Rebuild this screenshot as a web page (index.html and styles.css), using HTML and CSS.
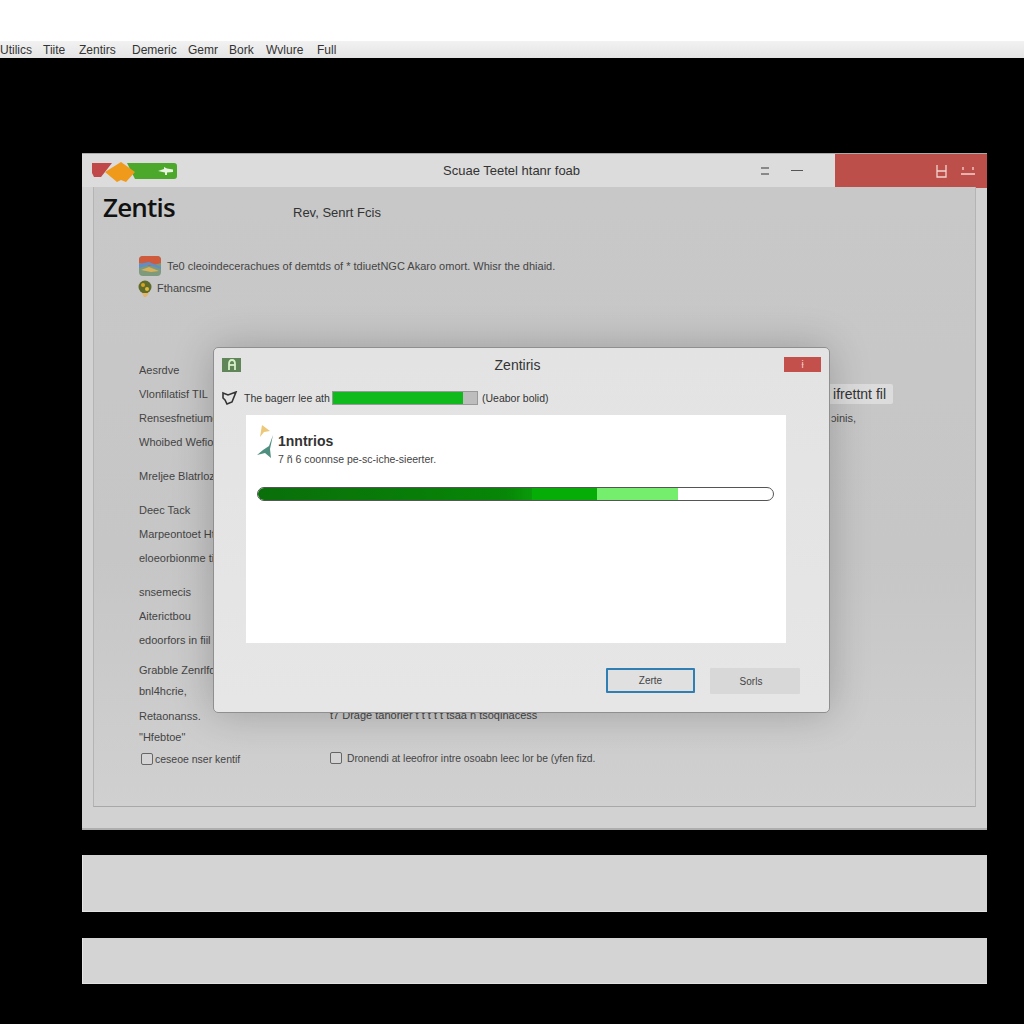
FILE: index.html
```html
<!DOCTYPE html>
<html lang="en">
<head>
    <meta charset="UTF-8">
    <meta name="viewport" content="width=device-width, initial-scale=1.0">
    <title>Zentris</title>
    <link rel="stylesheet" href="styles.css">
</head>
<body>
    <div class="top-strip"></div>
    <nav class="menubar">
        <span class="m1">Utilics</span>
        <span class="m2">Tiite</span>
        <span class="m3">Zentirs</span>
        <span class="m4">Demeric</span>
        <span class="m5">Gemr</span>
        <span class="m6">Bork</span>
        <span class="m7">Wvlure</span>
        <span>Full</span>
    </nav>

    <main class="desktop">
        <section class="window">
            <header class="titlebar">
                <svg class="logo" width="85" height="21" viewBox="0 0 85 21">
                    <path d="M0 1H20L9 15H2L0 11Z" fill="#c04848"/>
                    <path d="M35 1H82Q85 1 85 4V14Q85 17 82 17H43Z" fill="#4ba82a"/>
                    <path d="M29 0L43 10L34 20L29 18L25 20L13 10Z" fill="#f09a1c"/>
                    <path d="M66 9L72 7V5L75 6.500L81 7.500V10L75 10.500V13H73V10.500Z" fill="#e8f4df"/>
                </svg>
                <div class="win-title">Scuae Teetel htanr foab</div>
                <div class="win-controls">
                    <span class="ctl-lines"></span>
                    <span class="ctl-min"></span>
                </div>
                <div class="win-close">
                    <svg width="11" height="13" viewBox="0 0 11 13" fill="none" stroke="#f3d4cf" stroke-width="1.300">
                        <path d="M1 0V12H10V0M1 6H10"/>
                    </svg>
                    <svg width="14" height="9" viewBox="0 0 14 9" fill="none" stroke="#f3d4cf" stroke-width="1.300">
                        <path d="M2 0V3M12 0V3M0 7H14"/>
                    </svg>
                </div>
            </header>

            <div class="panel">
                <div class="panel-head">
                    <h1>Zentis</h1>
                    <span class="subhead">Rev, Senrt Fcis</span>
                </div>

                <div class="intro">
                    <div class="intro-line">
                        <svg width="22" height="20" viewBox="0 0 22 20">
                            <rect width="22" height="20" rx="4" fill="#7d9a7d"/>
                            <path d="M0 4Q0 0 4 0H18Q22 0 22 4V7L11 10L0 7Z" fill="#cf5a3c"/>
                            <path d="M0 8L10 6L22 11V13L10 9L0 12Z" fill="#5f8fc8"/>
                            <path d="M2 14L10 11L20 15L12 16Z" fill="#d8b25a"/>
                        </svg>
                        <span>Te0 cleoindecerachues of demtds of * tdiuetNGC Akaro omort. Whisr the dhiaid.</span>
                    </div>
                    <div class="intro-line second">
                        <svg width="14" height="18" viewBox="0 0 14 18">
                            <circle cx="7" cy="8" r="6.500" fill="#5f6b2a"/>
                            <circle cx="5" cy="6" r="2" fill="#d9a520"/>
                            <circle cx="9" cy="10" r="2" fill="#e2b93a"/>
                            <path d="M4 14H11L8 18H6Z" fill="#e3b56a"/>
                        </svg>
                        <span>Fthancsme</span>
                    </div>
                </div>

                <div class="columns">
                    <div class="col-left">
                        <div class="group">
                            <p>Aesrdve</p>
                            <p>Vlonfilatisf TIL</p>
                            <p>Rensesfnetiumd</p>
                            <p>Whoibed Wefiod</p>
                        </div>
                        <div class="group">
                            <p>Mreljee Blatrloz</p>
                        </div>
                        <div class="group">
                            <p>Deec Tack</p>
                            <p>Marpeontoet Hti</p>
                            <p>eloeorbionme tid</p>
                        </div>
                        <div class="group before-tight">
                            <p>snsemecis</p>
                            <p>Aiterictbou</p>
                            <p>edoorfors in fiil</p>
                        </div>
                        <div class="group tight">
                            <p>Grabble Zenrlfd</p>
                            <p>bnl4hcrie,</p>
                        </div>
                        <div class="group tight last">
                            <p>Retaonanss.</p>
                            <p>"Hfebtoe"</p>
                            <label class="check"><span class="box"></span>ceseoe nser kentif</label>
                        </div>
                    </div>
                    <div class="col-right">
                        <p class="note">t7 Drage tanorier t t t t t tsaa n tsoqinacess</p>
                        <label class="check wide"><span class="box"></span>Dronendi at leeofror intre osoabn leec lor be (yfen fizd.</label>
                    </div>
                </div>

                <span class="tag">ifrettnt fil</span>
                <span class="side-note">ɔinis,</span>
            </div>

            <div class="modal">
                <div class="modal-title">
                    <span class="modal-icon">
                        <svg width="10" height="11" viewBox="0 0 10 11" fill="none" stroke="#d6f0c8" stroke-width="1.800">
                            <path d="M2 11V5Q2 1 5 1Q8 1 8 5V11"/>
                            <path d="M2 6H8"/>
                        </svg>
                    </span>
                    <span class="modal-name">Zentiris</span>
                    <span class="modal-close">ɨ</span>
                </div>
                <div class="status">
                    <svg width="16" height="14" viewBox="0 0 16 14" fill="none" stroke="#333" stroke-width="1.600">
                        <path d="M1 2L6 4L14 1L12 6L10 11L5 13L3 9L1 7Z"/>
                    </svg>
                    <span class="status-text">The bagerr lee ath</span>
                    <span class="mini-track"><span class="mini-fill"></span></span>
                    <span class="status-after">(Ueabor bolid)</span>
                </div>
                <div class="sheet">
                    <div class="sheet-head">
                        <svg width="19" height="34" viewBox="0 0 19 34">
                            <path d="M5 0L13 6L7 7L3 12Z" fill="#ecc878"/>
                            <path d="M16 10L13 24L14 33L8 28L0 30L6 25L12 21Z" fill="#4f8f80"/>
                        </svg>
                        <div>
                            <div class="sheet-title">1nntrios</div>
                            <div class="sheet-sub">7 ñ 6 coonnse pe-sc-iche-sieerter.</div>
                        </div>
                    </div>
                    <div class="progress">
                        <span class="seg seg-dark"></span>
                        <span class="seg seg-mid"></span>
                        <span class="seg seg-light"></span>
                    </div>
                </div>
                <div class="modal-buttons">
                    <button class="btn primary">Zerte</button>
                    <button class="btn secondary">Sorls</button>
                </div>
            </div>
        </section>

        <div class="bar bar-tall"></div>
        <div class="bar bar-short"></div>
    </main>
</body>
</html>
```

FILE: styles.css
```css
* {
    box-sizing: border-box;
}
body {
    margin: 0;
    height: 1024px;
    overflow: hidden;
    background-color: #000;
    font-family: "Liberation Sans", Arial, sans-serif;
    color: #2a2a2a;
}
p {
    margin: 0;
}
.top-strip {
    height: 41px;
    background-color: #fff;
}
.menubar {
    display: flex;
    align-items: center;
    height: 17px;
    background: linear-gradient(#f2f2f2, #e4e4e4);
    font-size: 12px;
    color: #333;
    white-space: nowrap;
    overflow: hidden;
}
.menubar span {
    flex: none;
}
.m1 { width: 43px; }
.m2 { width: 36px; }
.m3 { width: 53px; }
.m4 { width: 56px; }
.m5 { width: 41px; }
.m6 { width: 37px; }
.m7 { width: 51px; }

.desktop {
    display: flex;
    flex-direction: column;
    padding: 95px 37px 0 82px;
}
.window {
    position: relative;
    display: flex;
    flex-direction: column;
    height: 677px;
    background-color: #d2d2d2;
    border-top: 1px solid #aaa;
    border-bottom: 2px solid #aeaeae;
}
.titlebar {
    display: flex;
    align-items: flex-start;
    flex: none;
    height: 33px;
    background-color: #dcdcdc;
}
.logo {
    flex: none;
    margin: 8px 0 0 10px;
}
.win-title {
    flex: none;
    width: 140px;
    margin: 9px 0 0 266px;
    font-size: 13px;
    color: #333;
    white-space: nowrap;
}
.win-controls {
    display: flex;
    align-items: center;
    gap: 22px;
    height: 33px;
    margin-left: 178px;
}
.ctl-lines {
    width: 8px;
    height: 8px;
    border-top: 2px solid #888;
    border-bottom: 2px solid #888;
}
.ctl-min {
    width: 12px;
    height: 1px;
    background-color: #555;
}
.win-close {
    display: flex;
    align-items: center;
    justify-content: flex-end;
    gap: 14px;
    width: 152px;
    height: 34px;
    margin-left: auto;
    padding-right: 12px;
    background-color: #bd4f4a;
}

.panel {
    position: relative;
    flex: none;
    height: 620px;
    margin: 0 11px 0 11px;
    padding: 0 0 0 8px;
    border-left: 1px solid #b4b4b4;
    border-right: 1px solid #b4b4b4;
    border-bottom: 1px solid #a8a8a8;
    background: linear-gradient(#c8c8c8 0%, #c6c6c6 60%, #d0d0d0 100%);
}
.panel-head {
    display: flex;
    align-items: baseline;
    height: 48px;
    padding-top: 2px;
}
.panel-head h1 {
    flex: none;
    width: 190px;
    margin: 0 0 0 1px;
    font-family: "Open Sans", sans-serif;
    font-size: 26px;
    font-weight: 600;
    letter-spacing: -0.8px;
    color: #111;
}
.subhead {
    font-size: 13px;
    color: #333;
}
.intro {
    margin-top: 20px;
    padding-left: 37px;
    font-size: 11px;
    color: #444;
}
.intro-line {
    display: flex;
    align-items: center;
    gap: 6px;
    height: 22px;
    white-space: nowrap;
}
.intro-line.second {
    gap: 5px;
    margin-left: -1px;
}
.columns {
    display: flex;
    margin-top: 59px;
    padding-left: 37px;
    font-size: 11px;
    color: #444;
}
.col-left {
    flex: none;
    width: 189px;
}
.col-left p {
    height: 24px;
    line-height: 24px;
    white-space: nowrap;
    overflow: hidden;
}
.group {
    margin-bottom: 10px;
}
.group.before-tight {
    margin-bottom: 8px;
}
.group.tight {
    margin-bottom: 4px;
}
.group.tight p {
    height: 21px;
    line-height: 21px;
}
.group.last {
    margin-bottom: 0;
}
.col-right {
    padding-top: 346px;
}
.note {
    height: 22px;
    padding-left: 2px;
    line-height: 22px;
    white-space: nowrap;
}
.check {
    display: flex;
    align-items: center;
    gap: 2px;
    height: 21px;
    margin-left: 2px;
    font-size: 10.500px;
    white-space: nowrap;
}
.check.wide {
    gap: 5px;
    height: 22px;
    margin-top: 21px;
    font-size: 10.300px;
}
.box {
    flex: none;
    width: 12px;
    height: 12px;
    border: 1px solid #666;
    border-radius: 2px;
    background-color: #d4d4d4;
}
.tag {
    position: absolute;
    top: 197px;
    right: 82px;
    width: 84px;
    height: 20px;
    padding-right: 7px;
    border-radius: 2px;
    background-color: #dcdcdc;
    font-size: 14px;
    line-height: 20px;
    text-align: right;
    white-space: nowrap;
    color: #333;
}
.side-note {
    position: absolute;
    top: 225px;
    left: 737px;
    font-size: 11px;
    color: #444;
}

.modal {
    position: absolute;
    top: 193px;
    left: 131px;
    display: flex;
    flex-direction: column;
    width: 617px;
    height: 366px;
    border: 1px solid #8f8f8f;
    border-radius: 5px;
    background: linear-gradient(#e3e3e3, #e6e6e6);
    box-shadow: 0 0 40px rgba(0, 0, 0, 0.22);
}
.modal-title {
    display: flex;
    align-items: center;
    flex: none;
    height: 33px;
    padding: 0 8px;
}
.modal-icon {
    display: flex;
    align-items: center;
    justify-content: center;
    flex: none;
    width: 19px;
    height: 14px;
    background-color: #5f8558;
}
.modal-name {
    flex: 1;
    padding-left: 10px;
    font-size: 14px;
    text-align: center;
    color: #333;
}
.modal-close {
    flex: none;
    width: 37px;
    height: 15px;
    background-color: #c4504c;
    font-size: 10px;
    line-height: 15px;
    text-align: center;
    color: #f3d4cf;
}
.status {
    display: flex;
    align-items: center;
    flex: none;
    height: 34px;
    padding-left: 8px;
    font-size: 10.500px;
    color: #333;
    white-space: nowrap;
}
.status-text {
    width: 88px;
    margin-left: 6px;
}
.mini-track {
    display: block;
    flex: none;
    width: 146px;
    height: 14px;
    margin-right: 4px;
    border: 1px solid #999;
    background-color: #bdbdbd;
}
.mini-fill {
    display: block;
    width: 90%;
    height: 100%;
    background-color: #10ba1c;
}
.sheet {
    flex: none;
    width: 540px;
    height: 228px;
    margin-left: 32px;
    padding: 10px 11px;
    background-color: #fff;
}
.sheet-head {
    display: flex;
    gap: 2px;
    height: 62px;
}
.sheet-title {
    margin-top: 8px;
    font-size: 14px;
    font-weight: 700;
    color: #333;
}
.sheet-sub {
    margin-top: 4px;
    font-size: 10.500px;
    color: #444;
}
.progress {
    display: flex;
    width: 517px;
    height: 14px;
    overflow: hidden;
    border: 1px solid #555;
    border-radius: 7px;
    background-color: #fff;
}
.seg {
    display: block;
    flex: none;
    height: 100%;
}
.seg-dark {
    width: 274px;
    background: linear-gradient(90deg, #0a6f0a, #078607 90%, #0a9a0a);
}
.seg-mid {
    width: 65px;
    background-color: #07ad07;
}
.seg-light {
    width: 81px;
    background-color: #74ee6c;
}
.modal-buttons {
    display: flex;
    justify-content: flex-end;
    align-items: flex-start;
    gap: 15px;
    margin-top: 25px;
    padding-right: 29px;
}
.btn {
    width: 90px;
    height: 26px;
    padding: 0;
    border: 0;
    border-radius: 1px;
    background-color: #d8d8d8;
    font-family: inherit;
    font-size: 10px;
    color: #444;
}
.btn.primary {
    width: 89px;
    height: 25px;
    border: 2px solid #2f7fb5;
    background-color: #e0e0e0;
}
.btn.secondary {
    padding-right: 8px;
}

.bar {
    background-color: #d4d4d4;
    border-left: 1px solid #e6e6e6;
    border-bottom: 1px solid #e2e2e2;
}
.bar-tall {
    height: 57px;
    margin-top: 25px;
}
.bar-short {
    height: 46px;
    margin-top: 26px;
}
```
